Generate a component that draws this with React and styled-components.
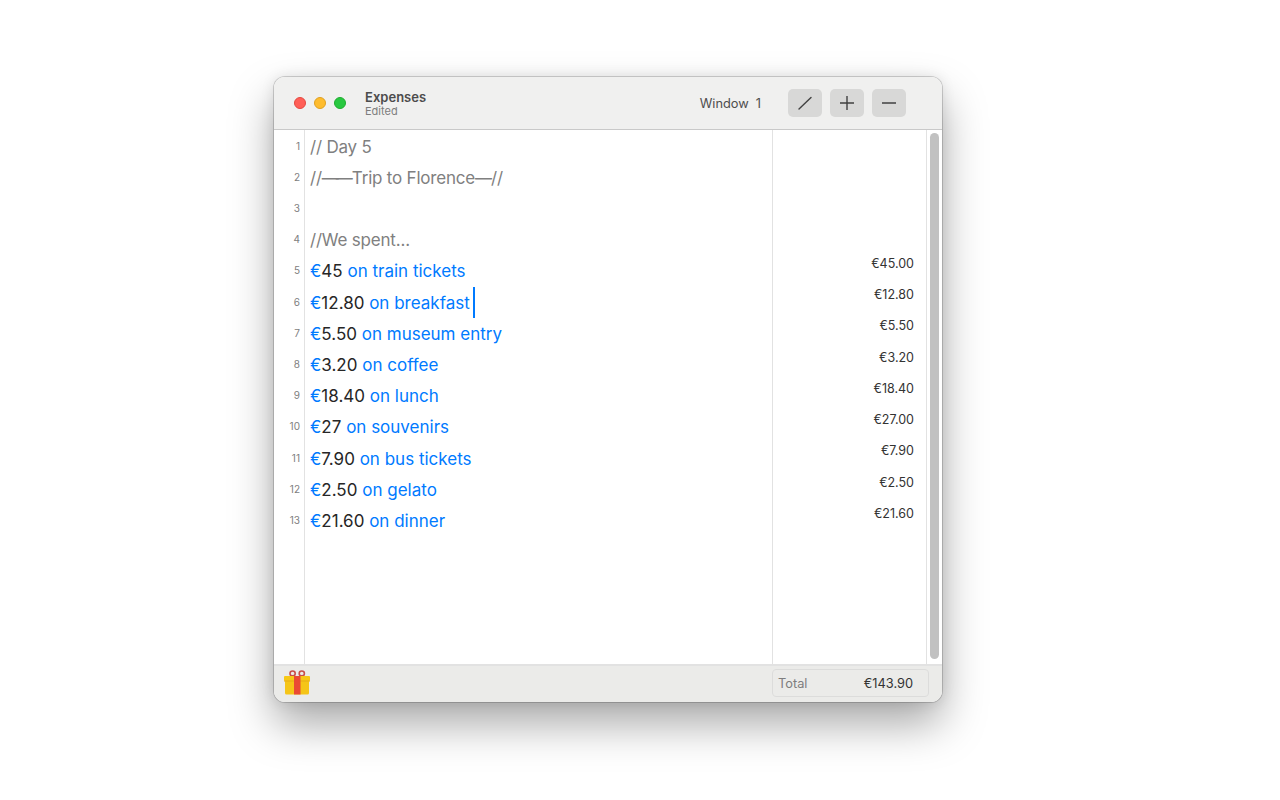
import React from 'react'
import styled, {createGlobalStyle} from 'styled-components'

const Global = createGlobalStyle`
  html, body {
    margin: 0;
    padding: 0;
    background: #fff;
  }
  * {
    box-sizing: border-box;
  }
`

const Page = styled.div`
  width: 1280px;
  height: 800px;
  overflow: hidden;
  padding: 77px 0 0 274px;
  background: #fff;
  font-family: Inter, 'Liberation Sans', sans-serif;
`

const Window = styled.div`
  width: 668px;
  height: 625px;
  display: flex;
  flex-direction: column;
  border-radius: 11px;
  overflow: hidden;
  background: #fff;
  box-shadow: 0 0 0 1px rgba(0, 0, 0, 0.16), 0 22px 44px rgba(0, 0, 0, 0.34), 0 0 14px rgba(0, 0, 0, 0.1);
`

const TitleBar = styled.div`
  height: 53px;
  flex: none;
  display: flex;
  align-items: center;
  padding: 0 36px 0 20px;
  background: #f0f0ef;
  border-bottom: 1px solid #c9c9c9;
`

const Lights = styled.div`
  display: flex;
  gap: 8px;
  margin-right: 19px;
`

const Light = styled.span`
  width: 12px;
  height: 12px;
  border-radius: 50%;
  background: ${p => p.$color};
  border: 0.5px solid ${p => p.$edge};
`

const TitleBlock = styled.div`
  display: flex;
  flex-direction: column;
  flex: 1;
  margin-top: 2px;
`

const Title = styled.div`
  font-size: 13px;
  line-height: 15px;
  font-weight: 600;
  letter-spacing: 0.02px;
  color: #4c4c4c;
`

const Subtitle = styled.div`
  font-size: 11px;
  line-height: 13px;
  color: #7d7d7d;
`

const WindowLabel = styled.div`
  display: flex;
  gap: 7px;
  font-size: 12.8px;
  color: #4d4d4d;
  margin-right: 27px;
`

const Buttons = styled.div`
  display: flex;
  gap: 8px;
  margin-bottom: 1px;
`

const ToolButton = styled.button`
  width: 34px;
  height: 28px;
  padding: 0;
  border: none;
  border-radius: 5px;
  background: #d8d8d7;
  display: flex;
  align-items: center;
  justify-content: center;
  & svg {
    display: block;
  }
`

const Body = styled.div`
  flex: 1;
  min-height: 0;
  display: flex;
`

const Gutter = styled.div`
  width: 31px;
  flex: none;
  padding-top: 0.1px;
  border-right: 1px solid #e2e2e2;
`

const LineNo = styled.div`
  height: 31.2px;
  padding-right: 4px;
  display: flex;
  align-items: center;
  justify-content: flex-end;
  font-size: 10px;
  color: #7e7e7e;
`

const Editor = styled.div`
  width: 468px;
  flex: none;
  padding: 1.1px 0 0 5px;
  border-right: 1px solid #e2e2e2;
`

const Line = styled.div`
  height: 31.2px;
  display: flex;
  align-items: center;
  white-space: pre;
  font-size: 17px;
  letter-spacing: ${p => p.$comment ? '-0.2px' : '0'};
  color: ${p => p.$comment ? '#808080' : '#007aff'};
`

const Dash = styled.span`
  letter-spacing: -3px;
  margin-right: 2px;
`

const Amount = styled.span`
  color: #262626;
`

const Caret = styled.span`
  width: 2px;
  height: 31px;
  margin-left: 3px;
  background: #007aff;
`

const Results = styled.div`
  width: 154px;
  flex: none;
  padding: 117.8px 12px 0 0;
  border-right: 1px solid #e2e2e2;
`

const Result = styled.div`
  height: 31.25px;
  display: flex;
  align-items: center;
  justify-content: flex-end;
  font-size: 12.5px;
  color: #333;
`

const Track = styled.div`
  flex: 1;
  padding: 3px 3px 5px 3px;
`

const Thumb = styled.div`
  width: 9px;
  height: 100%;
  border-radius: 5px;
  background: #c1c1c1;
`

const Footer = styled.div`
  height: 38px;
  flex: none;
  display: flex;
  align-items: center;
  justify-content: space-between;
  padding: 0 13px 2px 9px;
  background: #ebebe9;
  border-top: 2px solid #e2e2e2;
`

const TotalBox = styled.div`
  width: 157px;
  height: 28px;
  display: flex;
  align-items: center;
  justify-content: space-between;
  padding: 0 15px 0 5px;
  border: 1px solid #dcdcdb;
  border-radius: 4px;
  font-size: 12.8px;
`

const TotalLabel = styled.span`
  color: #7e7e7e;
`

const TotalValue = styled.span`
  color: #333;
`

const Gift = () => (
  <svg width='28' height='26' viewBox='0 0 28 26'>
    <ellipse cx='9.6' cy='3.4' rx='2.6' ry='2.4' fill='none' stroke='#c9504a' strokeWidth='1.6' />
    <ellipse cx='18.8' cy='3.4' rx='2.6' ry='2.4' fill='none' stroke='#c9504a' strokeWidth='1.6' />
    <rect x='2' y='10' width='24' height='14.500' rx='1.5' fill='#f5c518' />
    <rect x='1' y='6' width='26' height='5' rx='1' fill='#f7c815' />
    <rect x='1' y='10.500' width='26' height='1' fill='#e8ab18' />
    <rect x='11' y='6' width='6.500' height='18.500' fill='#ea4a34' />
  </svg>
)

const lines = [
  {comment: '// Day 5'},
  {comment: <>//<Dash>——</Dash>Trip to Florence<Dash>—</Dash>//</>},
  {comment: ' '},
  {comment: '//We spent...'},
  {amount: '45', rest: ' on train tickets', result: '€45.00'},
  {amount: '12.80', rest: ' on breakfast', result: '€12.80', caret: true},
  {amount: '5.50', rest: ' on museum entry', result: '€5.50'},
  {amount: '3.20', rest: ' on coffee', result: '€3.20'},
  {amount: '18.40', rest: ' on lunch', result: '€18.40'},
  {amount: '27', rest: ' on souvenirs', result: '€27.00'},
  {amount: '7.90', rest: ' on bus tickets', result: '€7.90'},
  {amount: '2.50', rest: ' on gelato', result: '€2.50'},
  {amount: '21.60', rest: ' on dinner', result: '€21.60'}
]

export default function App () {
  return (
    <Page>
      <Global />
      <Window>
        <TitleBar>
          <Lights>
            <Light $color='#ff5f57' $edge='#e5483f' />
            <Light $color='#febc2e' $edge='#e0a020' />
            <Light $color='#28c840' $edge='#1ead2e' />
          </Lights>
          <TitleBlock>
            <Title>Expenses</Title>
            <Subtitle>Edited</Subtitle>
          </TitleBlock>
          <WindowLabel><span>Window</span><span>1</span></WindowLabel>
          <Buttons>
            <ToolButton>
              <svg width='14' height='14' viewBox='0 0 14 14'>
                <path d='M1 13 L13 1.500' stroke='#404040' strokeWidth='1.4' strokeLinecap='round' />
              </svg>
            </ToolButton>
            <ToolButton>
              <svg width='14' height='14' viewBox='0 0 14 14'>
                <path d='M7 0 V14 M0 7 H14' stroke='#404040' strokeWidth='1.4' />
              </svg>
            </ToolButton>
            <ToolButton>
              <svg width='14' height='14' viewBox='0 0 14 14'>
                <path d='M0 7 H14' stroke='#404040' strokeWidth='1.4' />
              </svg>
            </ToolButton>
          </Buttons>
        </TitleBar>
        <Body>
          <Gutter>
            {lines.map((l, i) => <LineNo key={i}>{i + 1}</LineNo>)}
          </Gutter>
          <Editor>
            {lines.map((l, i) => l.comment
              ? <Line key={i} $comment>{l.comment}</Line>
              : (
                <Line key={i}>
                  €<Amount>{l.amount}</Amount>{l.rest}{l.caret && <Caret />}
                </Line>
              ))}
          </Editor>
          <Results>
            {lines.filter(l => l.result).map((l, i) => <Result key={i}>{l.result}</Result>)}
          </Results>
          <Track><Thumb /></Track>
        </Body>
        <Footer>
          <Gift />
          <TotalBox>
            <TotalLabel>Total</TotalLabel>
            <TotalValue>€143.90</TotalValue>
          </TotalBox>
        </Footer>
      </Window>
    </Page>
  )
}
